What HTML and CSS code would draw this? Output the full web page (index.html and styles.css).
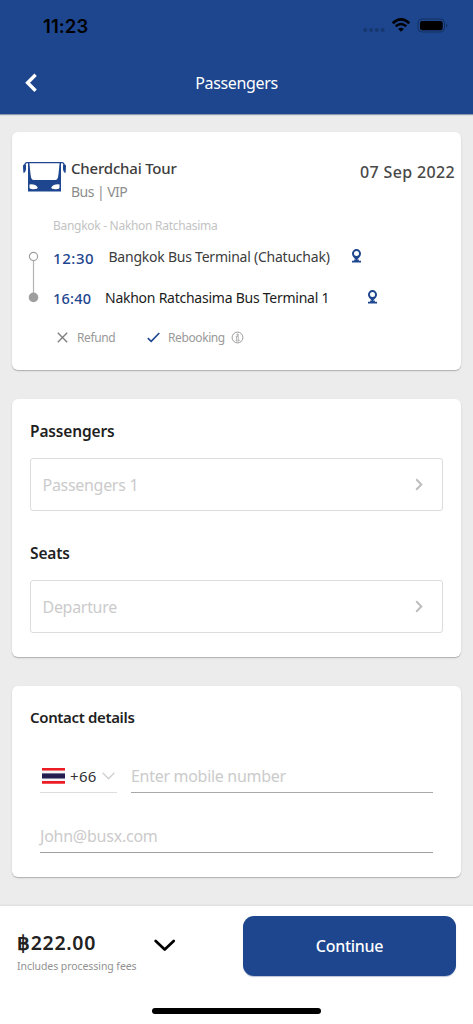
FILE: index.html
```html
<!DOCTYPE html>
<html lang="en">
<head>
<meta charset="utf-8">
<title>Passengers</title>
<link rel="stylesheet" href="styles.css">
</head>
<body>
<header class="header">
  <div class="status">
    <span class="clock">11:23</span>
    <svg class="status-icons" width="86" height="16" viewBox="0 0 86 16">
      <g fill="#17376f"><circle cx="2.3" cy="12" r="2"/><circle cx="8.1" cy="12" r="2"/><circle cx="13.9" cy="12" r="2"/><circle cx="19.7" cy="12" r="2"/></g>
      <path d="M29.7 5.2Q38 -2.4 46.3 5.2" fill="none" stroke="#000" stroke-width="2.7"/>
      <path d="M32.7 8.3Q38 3.7 43.3 8.3" fill="none" stroke="#000" stroke-width="2.5"/>
      <path d="M35.2 10.9Q38 8.6 40.8 10.9L38 13.7Z"/>
      <rect x="55" y="1" width="26.5" height="13" rx="4" fill="none" stroke="#14305f"/>
      <rect x="57" y="3" width="22.7" height="9.3" rx="2.2"/>
      <path d="M83 5.5Q84.4 6 84.4 7.5T83 9.5Z" fill="#14305f"/>
    </svg>
  </div>
  <div class="nav">
    <svg class="back" width="13" height="20" viewBox="0 0 13 20"><path d="M10.6 1.8L2.6 9.8L10.6 17.8" fill="none" stroke="#fff" stroke-width="3.4"/></svg>
    <h1 class="title">Passengers</h1>
  </div>
</header>

<main class="content">
  <section class="card trip">
    <div class="operator">
      <svg class="bus" width="44" height="32" viewBox="0 0 44 32">
        <path fill="#1d468f" d="M5 1H38V30.6H5Z"/>
        <path fill="#fff" d="M6.4 2.2H36.6L35.6 12Q35.2 16.4 34.4 17.8Q33.7 19 32 19H11Q9.3 19 8.6 17.8Q7.8 16.4 7.4 12Z"/>
        <path fill="#fff" d="M6.5 23.4Q12.5 22.8 14.7 26.6Q14.8 28.2 10.5 28.2Q6.5 28.3 6.5 26.8ZM36.5 23.4Q30.5 22.8 28.3 26.6Q28.2 28.2 32.5 28.2Q36.5 28.3 36.5 26.8Z"/>
        <path d="M5.5 1.6H3.8Q2.2 1.8 1.7 4M37.5 1.6H39.2Q40.8 1.8 41.3 4" fill="none" stroke="#1d468f" stroke-width="1.3"/>
        <path d="M0 4.4Q.8 2.8 3 3.8V8.4Q2.6 11 .6 12.2Q0 9 0 4.4ZM43 4.4Q42.2 2.8 40 3.8V8.4Q40.4 11 42.4 12.2Q43 9 43 4.4Z" fill="#1d468f"/>
      </svg>
      <div class="operator-text">
        <div class="operator-name">Cherdchai Tour</div>
        <div class="operator-type">Bus | VIP</div>
      </div>
      <div class="date">07 Sep 2022</div>
    </div>
    <div class="route">Bangkok - Nakhon Ratchasima</div>
    <div class="stops">
      <svg class="line" width="11" height="52" viewBox="0 0 11 52"><path d="M5.5 10V42" stroke="#b4b4b4" stroke-width="1.2"/><circle cx="5.5" cy="5.5" r="4.1" fill="#fff" stroke="#a0a0a0" stroke-width="1.2"/><circle cx="5.5" cy="46.4" r="4.8" fill="#9e9e9e"/></svg>
      <div class="stop-list">
        <div class="stop">
          <span class="time dep-time">12:30</span><span class="place dep">Bangkok Bus Terminal (Chatuchak)</span>
          <svg class="pin" width="11" height="14" viewBox="0 0 11 14"><path d="M5.5 11.6C4.4 9.8 1 7.8 1 4.6a4.5 4.5 0 0 1 9 0C10 7.8 6.6 9.8 5.5 11.6Z" fill="#1d468f"/><circle cx="5.5" cy="4.5" r="2.5" fill="#fff"/><path d="M1 12.6H10M3.2 11.5H7.8" stroke="#1d468f" stroke-width="1.9"/></svg>
        </div>
        <div class="stop">
          <span class="time arr-time">16:40</span><span class="place arr">Nakhon Ratchasima Bus Terminal 1</span>
          <svg class="pin" width="11" height="14" viewBox="0 0 11 14"><path d="M5.5 11.6C4.4 9.8 1 7.8 1 4.6a4.5 4.5 0 0 1 9 0C10 7.8 6.6 9.8 5.5 11.6Z" fill="#1d468f"/><circle cx="5.5" cy="4.5" r="2.5" fill="#fff"/><path d="M1 12.6H10M3.2 11.5H7.8" stroke="#1d468f" stroke-width="1.9"/></svg>
        </div>
      </div>
    </div>
    <div class="policy">
      <svg width="11" height="11" viewBox="0 0 11 11"><path d="M.8 .8L10.2 10.2M10.2 .8L.8 10.2" stroke="#808080" stroke-width="1.4"/></svg>
      <span class="refund">Refund</span>
      <svg width="13" height="11" viewBox="0 0 13 11"><path d="M.8 6.2L4.2 9.4L12.3 1" fill="none" stroke="#1d468f" stroke-width="1.6"/></svg>
      <span class="rebooking">Rebooking</span>
      <svg width="13" height="13" viewBox="0 0 13 13" fill="none" stroke="#999"><circle cx="6.5" cy="6.5" r="5.4"/><path d="M5.2 5.4H7.3V9.2H8.2V10H5V9.2H5.7V6.2H5.2ZM6 3.1H7.4V4.3H6Z" stroke-width=".7"/></svg>
    </div>
  </section>

  <section class="card booking">
    <h2 class="heading h-pass">Passengers</h2>
    <div class="field"><span class="f-pass">Passengers 1</span><svg width="8" height="13" viewBox="0 0 8 13"><path d="M1.2 1.3L6.3 6.5L1.2 11.7" fill="none" stroke="#bdbdbd" stroke-width="2"/></svg></div>
    <h2 class="heading h-seats">Seats</h2>
    <div class="field"><span class="f-dep">Departure</span><svg width="8" height="13" viewBox="0 0 8 13"><path d="M1.2 1.3L6.3 6.5L1.2 11.7" fill="none" stroke="#bdbdbd" stroke-width="2"/></svg></div>
  </section>

  <section class="card contact">
    <h2 class="heading h-contact">Contact details</h2>
    <div class="phone">
      <div class="country">
        <svg class="flag" width="23" height="16" viewBox="0 0 23 16"><path fill="#ed1c24" d="M0 0H23V2.7H0ZM0 13H23V15.7H0Z"/><path fill="#241d4f" d="M0 5.2H23V10.7H0Z"/><path fill="#f4f5f8" d="M0 2.7H23V5.2H0ZM0 10.7H23V13H0Z"/></svg>
        <span class="code">+66</span>
        <svg width="13" height="8" viewBox="0 0 13 8"><path d="M.7 .8L6.5 6.7L12.3 .8" fill="none" stroke="#cfcfcf" stroke-width="1.3"/></svg>
      </div>
      <div class="mobile"><span class="mobile-text">Enter mobile number</span></div>
    </div>
    <div class="email"><span class="email-text">John@busx.com</span></div>
  </section>
</main>

<footer class="footer">
  <div class="price">
    <div class="amount">฿222.00</div>
    <div class="fees">Includes processing fees</div>
  </div>
  <svg class="expand" width="22" height="13" viewBox="0 0 22 13"><path d="M1.7 2L10.7 10.5L19.7 2" fill="none" stroke="#000" stroke-width="2.7" stroke-linecap="round" stroke-linejoin="round"/></svg>
  <div class="button"><span class="button-text">Continue</span></div>
  <div class="home"></div>
</footer>
</body>
</html>
```
FILE: styles.css
```css
* { box-sizing: border-box; }
body { margin: 0; width: 473px; height: 1024px; overflow: hidden; background: #ececec; font-family: "Noto Sans", "Open Sans", sans-serif; display: flex; flex-direction: column; white-space: nowrap; }
svg { display: block; flex: none; }
h1, h2 { margin: 0; }
.header { height: 114px; flex: none; background: #1d468f; box-shadow: 0 1px 1px #8c99ad; }
.status { height: 52px; display: flex; justify-content: space-between; padding: 13px 24px 0 43px; }
.clock { font: 600 18.5px/26px Inter, sans-serif; color: #000; letter-spacing: .1px; }
.status-icons { margin-top: 5px; }
.nav { height: 62px; display: grid; grid-template-columns: 72px 1fr 72px; align-items: center; }
.back { margin: -1px 0 0 25px; }
.title { text-align: center; color: #fff; font-size: 16px; font-weight: 400; line-height: 24px; letter-spacing: -.36px; }
.content { padding: 18px 12px 0; flex: 1; display: flex; flex-direction: column; }
.card { background: #fff; border-radius: 6px; box-shadow: 0 1px 1px rgba(0,0,0,.22), 0 1px 3px rgba(0,0,0,.06); flex: none; }
.trip { height: 238px; padding-top: 24px; margin-bottom: 29px; }
.operator { display: flex; height: 47px; padding: 0 6px 0 11px; }
.bus { margin-top: 5px; }
.operator-text { margin-left: 4px; flex: 1; }
.operator-name { font-size: 15px; line-height: 24px; font-weight: 500; color: #3c3c3c; letter-spacing: -.2px; }
.operator-type { font-size: 14px; line-height: 23px; color: #8d8d8d; letter-spacing: -.55px; }
.date { font-size: 16px; line-height: 32px; font-weight: 500; color: #484848; letter-spacing: .35px; }
.route { margin: 13px 0 0 41px; font-size: 12px; line-height: 20px; color: #c3c3c3; letter-spacing: -.29px; }
.stops { display: flex; padding-left: 16px; margin-top: 9px; }
.line { margin-top: 6px; }
.stop-list { margin-left: 14px; display: grid; gap: 17px; }
.stop { display: flex; height: 24px; line-height: 24px; }
.time { font-weight: 500; color: #1d468f; }
.dep-time { width: 55.5px; font-size: 15px; letter-spacing: .55px; line-height: 26px; }
.arr-time { width: 52px; font-size: 14.5px; letter-spacing: .25px; }
.place { font-size: 14px; }
.dep { width: 242.5px; color: #3c3c3c; letter-spacing: -.23px; }
.arr { width: 262px; color: #1c1c1c; letter-spacing: -.25px; }
.pin { margin-top: 4px; }
.policy { display: flex; align-items: center; margin: 17px 0 0 45px; height: 20px; font-size: 12px; color: #999; }
.refund { margin-left: 9px; width: 70px; letter-spacing: -.4px; }
.rebooking { margin-left: 8px; width: 63px; letter-spacing: -.4px; }
.booking { height: 258px; padding: 20px 18px 0; margin-bottom: 29px; }
.heading { font-size: 15px; line-height: 24px; font-weight: 600; color: #1f1f1f; }
.field { height: 53px; margin-top: 15px; border: 1px solid #dcdcdc; border-radius: 3px; display: flex; align-items: center; justify-content: space-between; padding: 0 19px 0 11.5px; color: #cbcbcb; font-size: 16px; letter-spacing: -.3px; }
.h-pass, .h-seats { font-size: 15.5px; letter-spacing: -.15px; }
.h-seats { margin-top: 30px; }
.contact { height: 191px; padding: 19px 28px 0; }
.h-contact { margin-left: -10px; letter-spacing: -.35px; }
.phone { display: flex; justify-content: space-between; margin-top: 31px; height: 33px; }
.country { width: 77px; display: flex; align-items: center; border-bottom: 1px solid #ddd; padding-left: 2px; }
.code { margin-left: 5px; width: 32px; font-size: 15px; color: #333; letter-spacing: .3px; }
.mobile { width: 302px; border-bottom: 1px solid #a8a8a8; font-size: 16px; line-height: 33px; color: #cbcbcb; letter-spacing: -.3px; }
.email { height: 30px; margin-top: 30px; border-bottom: 1px solid #a0a0a0; font-size: 16px; line-height: 27px; color: #cbcbcb; letter-spacing: -.24px; }
.footer { height: 118px; flex: none; background: #fff; box-shadow: 0 -1px 2px rgba(0,0,0,.07); display: grid; grid-template-columns: 154px 89px 213px; grid-template-rows: 102px 6px; }
.price { padding: 24px 0 0 17px; }
.amount { font-size: 19.5px; line-height: 26px; font-weight: 600; color: #222; letter-spacing: .7px; }
.fees { font-size: 10.5px; line-height: 20px; color: #929292; letter-spacing: -.07px; }
.expand { margin-top: 33px; }
.button { height: 60px; margin-top: 10px; background: #1d468f; border-radius: 11px; display: flex; align-items: center; justify-content: center; color: #fff; font-size: 16px; font-weight: 500; letter-spacing: -.3px; box-shadow: 0 1px 1px #b8c2d4; }
.home { grid-column: 1 / -1; width: 169px; height: 6px; background: #000; border-radius: 3px; margin-left: 152px; }
```
